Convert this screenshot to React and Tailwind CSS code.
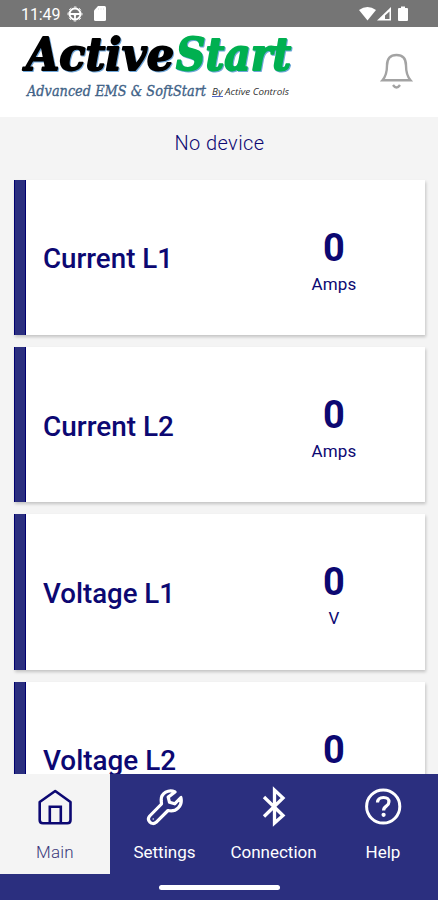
const readings = [
  { label: "Current L1", value: "0", unit: "Amps", width: 130 },
  { label: "Current L2", value: "0", unit: "Amps", width: 131 },
  { label: "Voltage L1", value: "0", unit: "V", width: 132 },
  { label: "Voltage L2", value: "0", unit: "V", width: 133 },
];

function StatusBar() {
  return (
    <div className="flex h-[27px] shrink-0 items-center bg-[#757575] pr-[29px] pl-[21px] text-white">
      <span className="w-[46px] pt-[2px] text-[16px] leading-[25px] tracking-[-0.1px]">11:49</span>
      <svg className="h-[16px] w-[16px]" viewBox="0 0 16 16" fill="none" stroke="white">
        <circle cx="8" cy="8" r="5.500" strokeWidth="2" />
        <circle cx="8" cy="8" r="7" strokeWidth="1" strokeDasharray="2.700 2.800" strokeDashoffset="1.350" />
        <path d="M3 8h10M8 8v5" strokeWidth="1.800" />
        <circle cx="8" cy="8.500" r="1.500" fill="white" stroke="none" />
      </svg>
      <svg className="ml-[10px] h-[15px] w-[14px]" viewBox="0 0 14 15">
        <path d="M5 0h6.500q1.500 0 1.500 1.500v12q0 1.500-1.500 1.500h-9Q1 15 1 13.500V4.500z" fill="white" />
        <path d="M5.500 2v2M8 2v2M10.500 2v2" stroke="#ddd" strokeWidth=".6" />
      </svg>
      <svg className="ml-auto h-[16px] w-[50px]" viewBox="0 0 50 16">
        <path d="M0 4Q8.500-2 17 4L8.500 14.500z" fill="white" />
        <path d="M18 14.500 32 1v13.500z" fill="white" />
        <path d="M26 9.500v3.500h4.500V5.500z" fill="#777" />
        <path d="M40 2h2V.5h4V2h2q1 0 1 1v11q0 1-1 1h-8q-1 0-1-1V3q0-1 1-1z" fill="white" />
      </svg>
    </div>
  );
}

function Logo() {
  return (
    <svg className="h-[90px] w-[310px]" viewBox="0 27 310 90">
      <g fontFamily="'DejaVu Serif', serif" fontWeight="700" fontStyle="italic" fontSize="44" strokeWidth="1.800" strokeLinejoin="round" className="[filter:drop-shadow(1px_1px_0.5px_#6fa6da)]">
        <text x="26" y="69.500" fill="#000" stroke="#000" textLength="148" lengthAdjust="spacingAndGlyphs">Active</text>
        <text x="176" y="69.500" fill="#00b050" stroke="#00b050" textLength="115" lengthAdjust="spacingAndGlyphs">Start</text>
      </g>
      <text x="27" y="95.500" fontFamily="'DejaVu Serif', serif" fontStyle="italic" fontSize="15" fill="#3f6287" stroke="#3f6287" strokeWidth=".35" textLength="179" lengthAdjust="spacingAndGlyphs">Advanced EMS &amp; SoftStart</text>
      <text x="212" y="95" fontFamily="'Open Sans', sans-serif" fontStyle="italic" fontSize="9.500" fill="#333" textLength="77" lengthAdjust="spacingAndGlyphs">By Active Controls</text>
      <path d="M212 96.500h11" stroke="#5266c4" strokeWidth="1" />
    </svg>
  );
}

function Header() {
  return (
    <header className="flex h-[90px] shrink-0 items-start bg-white">
      <Logo />
      <svg className="mt-[26px] ml-[70px] h-[38px] w-[34px]" viewBox="0 0 34 38" fill="none" stroke="#a3a3a3" strokeWidth="2.400" strokeLinejoin="miter">
        <path d="M2.500 27.200Q7 22 7 12.500Q7 2 16.500 2T26 12.500Q26 22 30.500 27.200z" />
        <path d="M13 32q3.500 5 7 0" />
      </svg>
    </header>
  );
}

function ReadingCard({ label, value, unit, width }) {
  return (
    <article className="flex h-[155.300px] w-[411px] shrink-0 bg-white shadow-[1px_2px_3px_rgba(0,0,0,0.2)]">
      <div className="w-[12px] border-x border-[#00006f] bg-[#2b2f7f]" />
      <div className="flex flex-1 items-center pl-[17px]">
        <svg className="h-[40px] w-[145px]" viewBox="0 0 145 40">
          <text x="0" y="30.500" fontSize="27.500" fontWeight="500" fill="#0c0872" textLength={width} lengthAdjust="spacingAndGlyphs">{label}</text>
        </svg>
      </div>
      <div className="flex w-[182px] flex-col items-center pt-[47px]">
        <span className="text-[38px] leading-[42px] font-bold">{value}</span>
        <span className="mt-[5px] text-[17px] leading-[20px] tracking-[0.200px]">{unit}</span>
      </div>
    </article>
  );
}

function HomeIcon() {
  return (
    <svg className="h-[38px] w-[38px]" viewBox="0 0 38 38" fill="none" stroke="#0c0872" strokeWidth="2.600" strokeLinejoin="round">
      <path d="M3.700 14 19.200 3l15.300 11V32q0 3.200-3.200 3.200H7q-3.300 0-3.300-3.200z" />
      <path d="M13.800 35V18.700h11V35" strokeLinejoin="miter" />
    </svg>
  );
}

function WrenchIcon() {
  return (
    <svg className="h-[38px] w-[38px]" viewBox="0 0 38 38" fill="none" stroke="white" strokeWidth="3.200" strokeLinejoin="round">
      <path d="M29 4C23 .7 14.800 5 15.200 12.500L15.500 16 3.700 28c-1.700 2-1.400 4.500.2 6.200s4.200 1.800 6.200.1L22 22.500c8.300 2 14.800-4.800 12.900-13l-6.200 6.300-5.200-1.500-1.300-5.200z" />
      <circle cx="7.200" cy="31" r=".7" fill="white" stroke="none" />
    </svg>
  );
}

function BluetoothIcon() {
  return (
    <svg className="h-[42px] w-[38px]" viewBox="0 0 38 42" fill="none" stroke="white" strokeWidth="3.300" strokeLinecap="butt">
      <path d="m9 11 19 18.500L19.500 37V4l8.500 8L9 30.500" />
    </svg>
  );
}

function HelpIcon() {
  return (
    <svg className="h-[38px] w-[38px]" viewBox="0 0 38 38" fill="none" stroke="white" strokeWidth="3.200">
      <circle cx="19.200" cy="18.500" r="16.600" strokeWidth="3" />
      <path d="M13.500 14.500q.3-5 6-5t5.400 4.600c0 4.500-5.300 3.600-5.300 8.300" />
      <circle cx="19.600" cy="26.800" r="2.100" fill="white" stroke="none" />
    </svg>
  );
}

function NavItem({ icon: Icon, label, active, width }) {
  return (
    <button className={`flex h-[100px] ${width} flex-col items-center ${active ? "bg-[#f4f4f4] text-[#3b397b]" : "text-white"}`}>
      <span className="mt-[12px] flex h-[42px] items-center justify-center"><Icon /></span>
      <span className={`mt-[13px] text-[17px] leading-[22px] ${active ? "font-light tracking-[0.200px]" : "font-normal"}`}>{label}</span>
    </button>
  );
}

export default function App() {
  return (
    <div className="flex h-[900px] w-[438px] flex-col overflow-hidden bg-[#f4f4f4] font-['Roboto',sans-serif] text-[#0c0872]">
      <StatusBar />
      <Header />
      <main className="flex min-h-0 flex-1 flex-col overflow-hidden pl-[14px]">
        <p className="h-[62.800px] w-[411px] shrink-0 pt-[14px] text-center text-[20px] leading-[24px] font-light tracking-[0.400px]">No device</p>
        <div className="flex flex-col gap-[12px]">
          {readings.map((r) => <ReadingCard key={r.label} {...r} />)}
        </div>
      </main>
      <nav className="h-[126px] shrink-0 bg-[#2b2f7f]">
        <div className="flex">
          <NavItem icon={HomeIcon} label="Main" active width="w-[110px]" />
          <NavItem icon={WrenchIcon} label="Settings" width="w-[109px]" />
          <NavItem icon={BluetoothIcon} label="Connection" width="w-[109px]" />
          <NavItem icon={HelpIcon} label="Help" width="w-[110px]" />
        </div>
        <div className="mx-auto mt-[11px] h-[5px] w-[121px] rounded-full bg-white" />
      </nav>
    </div>
  );
}
